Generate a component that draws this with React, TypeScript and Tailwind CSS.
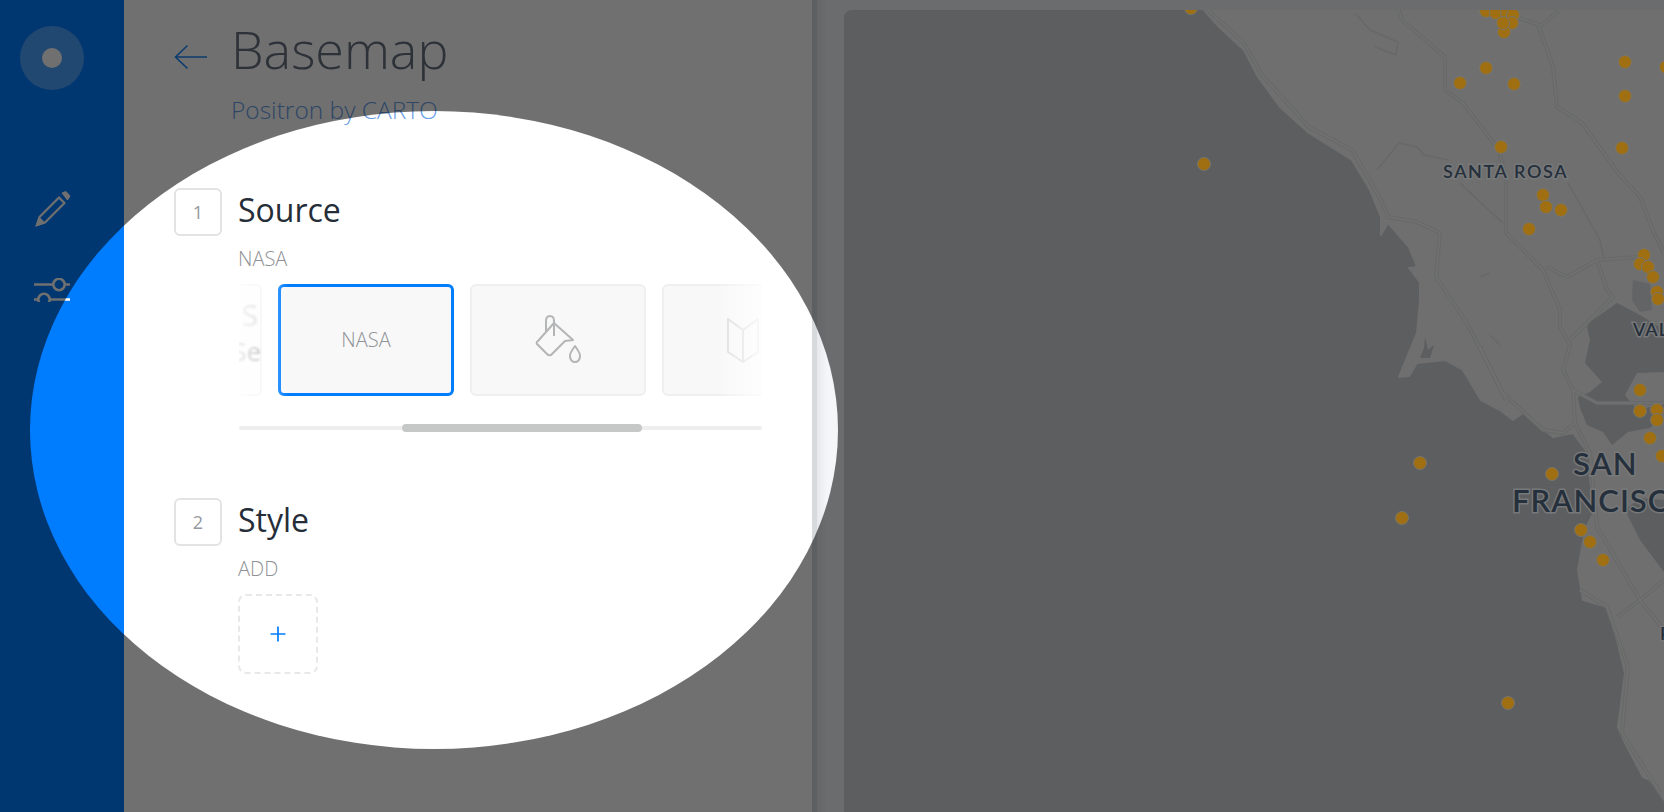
const LAND =
  'M1204 10 L1219 27 L1244 50 L1258 77 L1280 107 L1309 133 L1352 160 L1370 190 L1381 217 L1381 235 L1388 223 L1409 247 L1417 267 L1409 268 L1463 338 L1467 330 L1431 277 L1420 275 L1420 300 L1417 333 L1399 377 L1409 376 L1417 363 L1445 360 L1463 370 L1481 400 L1500 410 L1513 420 L1523 413 L1553 437 L1573 433 L1593 460 L1590 480 L1595 510 L1585 530 L1578 570 L1583 600 L1607 607 L1617 640 L1625 673 L1618 727 L1625 743 L1643 777 L1650 780 L1664 800 L1664 10 Z';

const BAYS = [
  'M1617 303 L1590 322 L1587 327 L1590 340 L1585 363 L1602 382 L1590 392 L1578 397 L1580 408 L1587 425 L1603 432 L1612 445 L1628 432 L1650 428 L1664 412 L1664 404 L1637 410 L1625 395 L1637 373 L1664 372 L1664 330 L1640 315 Z',
  'M1625 510 L1640 540 L1664 572 L1664 500 L1640 498 Z',
  'M1425 337 L1428 350 L1434 345 L1430 358 L1420 358 L1424 348 Z',
];

const ROADS = [
  'M1208 10 L1244 43 L1262 75 L1309 127 L1352 150 L1381 200 L1388 217 L1417 222 L1440 233 L1436 277 L1467 323 L1506 400',
  'M1399 10 L1402 20 L1445 57 L1445 90 L1463 103 L1499 150 L1506 180 L1506 233 L1543 270 L1560 310 L1560 327 L1570 345 L1563 370 L1573 390 L1575 423 L1563 433 L1543 430 L1503 393 L1480 347',
  'M1560 10 L1539 27 L1553 67 L1557 107 L1582 123 L1618 173 L1640 197 L1654 233 L1664 253',
  'M1539 25 L1517 17',
  'M1570 340 L1613 297 L1607 290 L1597 260 L1567 277 L1547 267',
  'M1597 260 L1637 257',
  'M1573 390 L1597 403 L1664 403',
  'M1575 423 L1590 453 L1597 527 L1640 600 L1664 630',
  'M1617 617 L1640 600 L1664 580',
  'M1580 590 L1607 607 L1628 667 L1622 733 L1660 793',
];

const MINOR = [
  'M1377 170 L1399 143 L1417 147 L1424 155 L1449 160',
  'M1460 183 L1481 203 L1503 223',
  'M1568 183 L1600 240 L1604 260',
  'M1355 13 L1370 30 L1398 42 L1396 55 L1375 47',
  'M1480 277 L1490 273',
  'M1490 335 L1500 345',
];

const DOTS: [number, number][] = [
  [1191, 8], [1204, 164], [1486, 68], [1460, 83], [1514, 84], [1501, 147], [1543, 195], [1546, 207],
  [1561, 210], [1529, 229], [1625, 62], [1625, 96], [1622, 148], [1666, 67], [1486, 11], [1496, 13],
  [1507, 13], [1513, 15], [1512, 23], [1504, 32], [1503, 23], [1644, 255], [1640, 264], [1648, 267],
  [1653, 277], [1657, 292], [1658, 299], [1640, 390], [1640, 411], [1657, 410], [1657, 420], [1650, 438],
  [1662, 456], [1420, 463], [1402, 518], [1508, 703], [1552, 474], [1581, 530], [1590, 542], [1603, 560],
];

function MapView() {
  return (
    <div className="relative z-20 mt-[10px] h-[802px] flex-1 overflow-hidden rounded-tl-lg">
      <svg viewBox="844 10 820 802" className="block h-full w-full font-[Lato]">
        <rect x="844" y="10" width="820" height="802" fill="#5d5e60" />
        <path d={LAND} fill="#6f6f6f" stroke="#6f6f6f" strokeLinejoin="round" strokeWidth="2" />
        {BAYS.map((d) => (
          <path key={d} d={d} fill="#5d5e60" strokeLinejoin="round" />
        ))}
        <path d="M1633 280 L1650 284 L1652 310 L1640 312 L1632 300 Z" fill="#636466" />
        {MINOR.map((d) => (
          <path key={d} d={d} fill="none" stroke="#686868" strokeWidth="1.5" strokeLinejoin="round" />
        ))}
        {ROADS.map((d) => (
          <path key={d} d={d} fill="none" stroke="#686969" strokeWidth="4" strokeLinejoin="round" />
        ))}
        {ROADS.map((d) => (
          <path key={d} d={d} fill="none" stroke="#717171" strokeWidth="1.5" strokeLinejoin="round" />
        ))}
        {DOTS.map(([x, y]) => (
          <circle key={`${x}-${y}`} cx={x} cy={y} r="6.5" fill="#9f6f12" stroke="#77756c" strokeWidth="1" />
        ))}
        <g fill="#25303c" stroke="#777879" strokeWidth="3" paintOrder="stroke" fontWeight="600">
          <text x="1443" y="178" fontSize="18" letterSpacing="1.6">SANTA ROSA</text>
          <text x="1633" y="336" fontSize="18" letterSpacing="1">VALLEJO</text>
          <text x="1573" y="475" fontSize="31" letterSpacing="1">SAN</text>
          <text x="1512" y="512" fontSize="31" letterSpacing="1">FRANCISCO</text>
          <text x="1660" y="640" fontSize="18">PACIFICA</text>
        </g>
      </svg>
    </div>
  );
}

function Pencil() {
  return (
    <svg viewBox="0 0 40 40" className="h-10 w-10" fill="none" stroke="white" strokeWidth="2.2">
      <path d="M5 35 L7.5 27 L27 7.5 L32.5 13 L13 32.5 Z" strokeLinejoin="round" />
      <path d="M5 35 L7.5 28.5 L11.5 32.5 Z" fill="white" />
      <path d="M30 3 L34 1.5 L38 6 L35.5 10 Z" fill="white" stroke="white" strokeWidth="1" />
    </svg>
  );
}

function Sliders() {
  return (
    <svg viewBox="0 0 40 24" className="h-6 w-10" fill="none" stroke="white" strokeWidth="2.6">
      <path d="M2 6.5 H21 M33 6.5 H38" />
      <circle cx="27" cy="6.5" r="5.7" />
      <path d="M2 21.5 H6 M18 21.5 H38" />
      <circle cx="12" cy="21.5" r="5.7" />
    </svg>
  );
}

function Bucket() {
  return (
    <svg viewBox="535 312 48 54" className="ml-[2px] h-[54px] w-12" fill="none" stroke="#b4b5b6" strokeWidth="2" strokeLinejoin="round">
      <path d="M554 322 L573 339 L565 340 L551 354 Q549 355 547 353 L537 343 Q536 341 538 340 Z" />
      <path d="M546 331 L546 320 Q546 315 550 315 Q554 315 554 320 L554 335" />
      <path d="M575 345 Q581 353 580 356 Q579 361 575 361 Q571 361 570 356 Q569 353 575 345 Z" />
    </svg>
  );
}

function BookIcon() {
  return (
    <svg viewBox="726 314 34 47" className="mr-[14px] h-[47px] w-[34px]" fill="none" stroke="#dcdcdc" strokeWidth="2">
      <path d="M728 316 L743 327 L758 316 L758 349 L743 359 L728 349 Z M743 327 V359" strokeLinejoin="round" />
    </svg>
  );
}

function StepTitle({ n, title, sub }: { n: number; title: string; sub: string }) {
  return (
    <div className="flex">
      <div className="flex h-12 w-12 items-center justify-center rounded-md border-2 border-[#e3e3e3] text-lg font-medium text-[#95999e]">
        {n}
      </div>
      <div className="ml-4">
        <h2 className="text-[32px] leading-[44px] text-[#252d38]">{title}</h2>
        <p className="mt-[13px] text-xl leading-[28px] font-light text-[#8f9296]">{sub}</p>
      </div>
    </div>
  );
}

const cardCls = 'flex h-[112px] w-[176px] shrink-0 items-center justify-center rounded-md border-2 border-[#efefef] bg-[#f8f8f8]';

export default function App() {
  return (
    <div className="relative flex h-[812px] w-[1664px] overflow-hidden bg-[#f4f6f8] font-['Open_Sans',sans-serif]">
      {/* Sidebar */}
      <aside className="flex w-[124px] shrink-0 flex-col items-center bg-[#007dff] pt-[26px] pr-[20px]">
        <div className="flex h-16 w-16 items-center justify-center rounded-full bg-white/30">
          <div className="h-5 w-5 rounded-full bg-white" />
        </div>
        <div className="mt-[100px]">
          <Pencil />
        </div>
        <div className="mt-[48px]">
          <Sliders />
        </div>
      </aside>

      {/* Panel */}
      <main className="w-[688px] shrink-0 bg-white pt-[15px] pl-[50px]">
        <div className="flex items-start">
          <svg viewBox="0 0 34 26" className="mt-[29px] h-[26px] w-[34px]" fill="none" stroke="#1b87f5" strokeWidth="1.6">
            <path d="M33 13 H1.5 M13.5 1.5 L1.5 13 L13.5 24.5" />
          </svg>
          <div className="ml-[25px]">
            <h1 className="-ml-[2px] text-[52px] leading-[68px] font-light text-[#667080]">Basemap</h1>
            <p className="-ml-[2px] mt-[12px] text-[24.5px] leading-[30px] font-light text-[#6aa0e8]">Positron by CARTO</p>
          </div>
        </div>

        <section className="mt-[63px]">
          <StepTitle n={1} title="Source" sub="NASA" />
          <div className="relative mt-[11px] ml-[65px] w-[523px] overflow-hidden">
            <div className="-ml-[153px] flex gap-4">
              <div className="relative flex h-[112px] w-[176px] shrink-0 rounded-md border-2 border-[#f3f3f3] bg-[#fdfdfd]">
                <span className="absolute top-[6px] right-[2px] text-[30px] text-[#c8c8c8] blur-[1px]">S</span>
                <span className="absolute top-[46px] -right-[1px] text-[26px] text-[#9a9a9a] blur-[1px]">Se</span>
              </div>
              <div className="flex h-[112px] w-[176px] shrink-0 items-center justify-center rounded-md border-[3px] border-[#007dff] bg-[#f8f8f8] text-xl font-light text-[#8f9296]">
                NASA
              </div>
              <div className={cardCls}>
                <Bucket />
              </div>
              <div className={cardCls}>
                <BookIcon />
              </div>
            </div>
            <div className="absolute inset-y-0 left-0 w-[50px] bg-gradient-to-r from-white/80 to-transparent" />
            <div className="absolute inset-y-0 right-0 w-[45px] bg-gradient-to-l from-white/85 to-transparent" />
          </div>
          <div className="relative mt-[30px] ml-[65px] h-1 w-[523px] rounded-full bg-[#eeeeee]">
            <div className="absolute -top-[2px] left-[163px] h-2 w-[240px] rounded-full bg-[#c6c7c7]" />
          </div>
        </section>

        <section className="mt-[68px]">
          <StepTitle n={2} title="Style" sub="ADD" />
          <div className="mt-[11px] ml-[64px] flex h-20 w-20 items-center justify-center rounded-lg border-2 border-dashed border-[#e8e8e8] text-[#007dff]">
            <svg viewBox="0 0 16 16" className="h-4 w-4" fill="none" stroke="currentColor" strokeWidth="1.7">
              <path d="M8 0.5 V15.5 M0.5 8 H15.5" />
            </svg>
          </div>
        </section>
      </main>

      {/* Shadow gutter between panel and map */}
      <div className="flex w-8 shrink-0">
        <div className="w-[5px] bg-[#d7d9dc]" />
        <div className="w-[10px] bg-gradient-to-r from-[#e6e9ec] to-[#f4f6f8]" />
      </div>

      <MapView />

      {/* Onboarding spotlight */}
      <div className="pointer-events-none absolute top-[111px] left-[30px] z-10 h-[638px] w-[808px] rounded-[50%] shadow-[0_0_0_1800px_rgba(0,0,0,0.56)]" />
    </div>
  );
}
